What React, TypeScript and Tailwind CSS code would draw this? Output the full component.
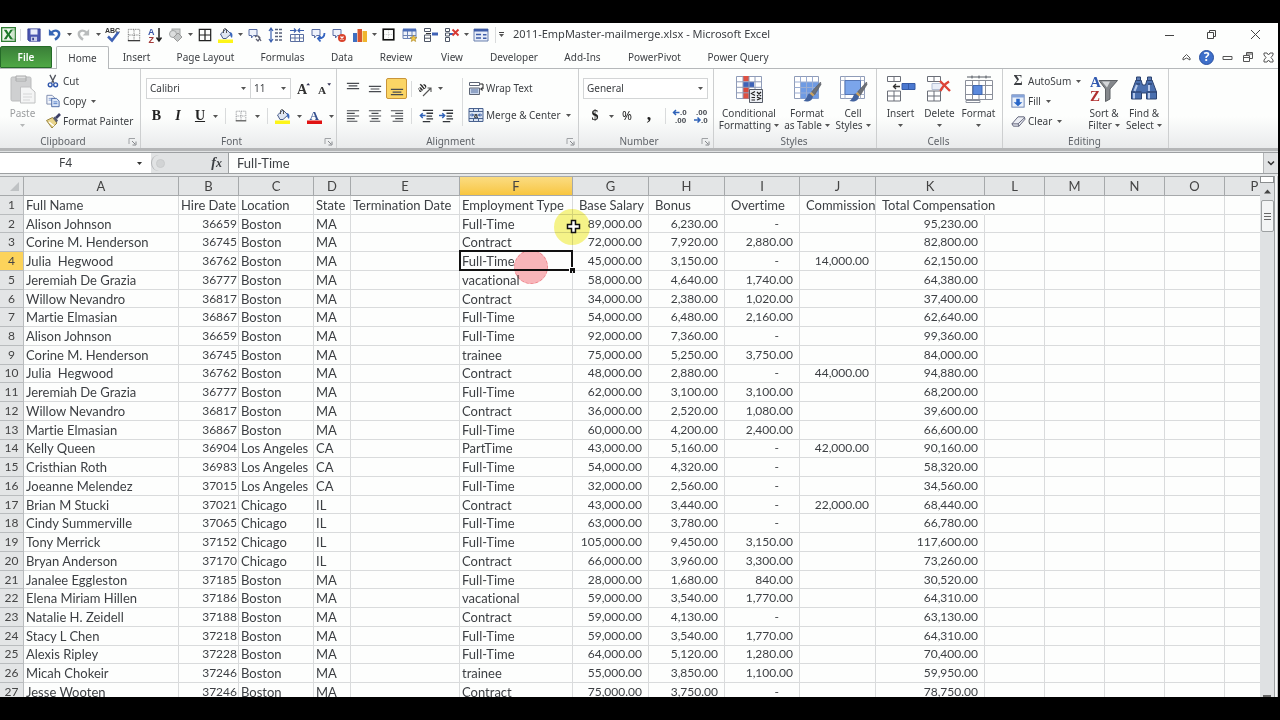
import type { ReactNode } from "react"

type Row = [string, string, string, string, string, string, string, string, string, string]

const employees: Row[] = [
  ["Alison Johnson", "36659", "Boston", "MA", "Full-Time", "89,000.00", "6,230.00", "-", "", "95,230.00"],
  ["Corine M. Henderson", "36745", "Boston", "MA", "Contract", "72,000.00", "7,920.00", "2,880.00", "", "82,800.00"],
  ["Julia  Hegwood", "36762", "Boston", "MA", "Full-Time", "45,000.00", "3,150.00", "-", "14,000.00", "62,150.00"],
  ["Jeremiah De Grazia", "36777", "Boston", "MA", "vacational", "58,000.00", "4,640.00", "1,740.00", "", "64,380.00"],
  ["Willow Nevandro", "36817", "Boston", "MA", "Contract", "34,000.00", "2,380.00", "1,020.00", "", "37,400.00"],
  ["Martie Elmasian", "36867", "Boston", "MA", "Full-Time", "54,000.00", "6,480.00", "2,160.00", "", "62,640.00"],
  ["Alison Johnson", "36659", "Boston", "MA", "Full-Time", "92,000.00", "7,360.00", "-", "", "99,360.00"],
  ["Corine M. Henderson", "36745", "Boston", "MA", "trainee", "75,000.00", "5,250.00", "3,750.00", "", "84,000.00"],
  ["Julia  Hegwood", "36762", "Boston", "MA", "Contract", "48,000.00", "2,880.00", "-", "44,000.00", "94,880.00"],
  ["Jeremiah De Grazia", "36777", "Boston", "MA", "Full-Time", "62,000.00", "3,100.00", "3,100.00", "", "68,200.00"],
  ["Willow Nevandro", "36817", "Boston", "MA", "Contract", "36,000.00", "2,520.00", "1,080.00", "", "39,600.00"],
  ["Martie Elmasian", "36867", "Boston", "MA", "Full-Time", "60,000.00", "4,200.00", "2,400.00", "", "66,600.00"],
  ["Kelly Queen", "36904", "Los Angeles", "CA", "PartTime", "43,000.00", "5,160.00", "-", "42,000.00", "90,160.00"],
  ["Cristhian Roth", "36983", "Los Angeles", "CA", "Full-Time", "54,000.00", "4,320.00", "-", "", "58,320.00"],
  ["Joeanne Melendez", "37015", "Los Angeles", "CA", "Full-Time", "32,000.00", "2,560.00", "-", "", "34,560.00"],
  ["Brian M Stucki", "37021", "Chicago", "IL", "Contract", "43,000.00", "3,440.00", "-", "22,000.00", "68,440.00"],
  ["Cindy Summerville", "37065", "Chicago", "IL", "Full-Time", "63,000.00", "3,780.00", "-", "", "66,780.00"],
  ["Tony Merrick", "37152", "Chicago", "IL", "Full-Time", "105,000.00", "9,450.00", "3,150.00", "", "117,600.00"],
  ["Bryan Anderson", "37170", "Chicago", "IL", "Contract", "66,000.00", "3,960.00", "3,300.00", "", "73,260.00"],
  ["Janalee Eggleston", "37185", "Boston", "MA", "Full-Time", "28,000.00", "1,680.00", "840.00", "", "30,520.00"],
  ["Elena Miriam Hillen", "37186", "Boston", "MA", "vacational", "59,000.00", "3,540.00", "1,770.00", "", "64,310.00"],
  ["Natalie H. Zeidell", "37188", "Boston", "MA", "Contract", "59,000.00", "4,130.00", "-", "", "63,130.00"],
  ["Stacy L Chen", "37218", "Boston", "MA", "Full-Time", "59,000.00", "3,540.00", "1,770.00", "", "64,310.00"],
  ["Alexis Ripley", "37228", "Boston", "MA", "Full-Time", "64,000.00", "5,120.00", "1,280.00", "", "70,400.00"],
  ["Micah Chokeir", "37246", "Boston", "MA", "trainee", "55,000.00", "3,850.00", "1,100.00", "", "59,950.00"],
  ["Jesse Wooten", "37246", "Boston", "MA", "Contract", "75,000.00", "3,750.00", "-", "", "78,750.00"],
]

const columns = [
  { id: "A", w: "w-[155px]" },
  { id: "B", w: "w-[60px]" },
  { id: "C", w: "w-[75px]" },
  { id: "D", w: "w-[37px]" },
  { id: "E", w: "w-[109px]" },
  { id: "F", w: "w-[113px]" },
  { id: "G", w: "w-[76px]" },
  { id: "H", w: "w-[76px]" },
  { id: "I", w: "w-[75px]" },
  { id: "J", w: "w-[76px]" },
  { id: "K", w: "w-[109px]" },
  { id: "L", w: "w-[60px]" },
  { id: "M", w: "w-[60px]" },
  { id: "N", w: "w-[60px]" },
  { id: "O", w: "w-[60px]" },
  { id: "P", w: "w-[60px]" },
]

const tabs = [
  { name: "Insert", w: "w-[55px]" },
  { name: "Page Layout", w: "w-[83px]" },
  { name: "Formulas", w: "w-[71px]" },
  { name: "Data", w: "w-[48px]" },
  { name: "Review", w: "w-[60px]" },
  { name: "View", w: "w-[52px]" },
  { name: "Developer", w: "w-[72px]" },
  { name: "Add-Ins", w: "w-[65px]" },
  { name: "PowerPivot", w: "w-[79px]" },
  { name: "Power Query", w: "w-[88px]" },
]

function Svg({ children, className = "size-4", box = 16 }: { children: ReactNode; className?: string; box?: number }) {
  return (
    <svg viewBox={`0 0 ${box} ${box}`} className={`shrink-0 overflow-visible ${className}`} fill="none" aria-hidden="true">
      {children}
    </svg>
  )
}

function Caret({ className = "text-[#555]" }: { className?: string }) {
  return (
    <svg viewBox="0 0 5 3" className={`h-[3px] w-[5px] shrink-0 ${className}`} aria-hidden="true">
      <path d="M0 0h5L2.5 3z" fill="currentColor" />
    </svg>
  )
}

/* ---------- small icons ---------- */

const ExcelIcon = () => (
  <Svg className="size-[15px]">
    <rect x=".7" y=".7" width="14.6" height="14.6" fill="#eef7ec" stroke="#2e7d32" strokeWidth="1.4" />
    <path d="M11 3h4v10h-4" fill="#cfe6cd" stroke="#5b9a5c" strokeWidth=".7" />
    <path d="M3 3h3l2 3.3L10 3h2.6L9.3 8l3.4 5H9.800L7.800 9.700 5.900 13H3l3.400-5z" fill="#1f7a2c" />
  </Svg>
)

const SaveIcon = () => (
  <Svg className="size-[14px]">
    <path d="M1 1h14v14H2.500L1 13.500z" fill="#4a55b0" stroke="#363f92" />
    <path d="M4 1.500h8v6H4z" fill="#e9ecfa" />
    <path d="M4.500 10h7v5h-7z" fill="#c9cdea" />
    <path d="M6 11h2v3H6z" fill="#39428f" />
  </Svg>
)

const UndoIcon = ({ redo = false }: { redo?: boolean }) => (
  <Svg className={redo ? "size-[15px] -scale-x-100" : "size-[15px]"}>
    <path d="M5 5.500c4-3 8-1.500 8 2 0 2.600-2 4.500-4.500 6" stroke={redo ? "#b9bcbc" : "#3464b4"} strokeWidth="2.600" />
    <path d="M2 2v7h7z" fill={redo ? "#b9bcbc" : "#3464b4"} />
  </Svg>
)

const SpellIcon = () => (
  <Svg>
    <text x="0" y="6" fontSize="7" fontWeight="700" fontFamily="Liberation Sans, sans-serif" fill="#333">ABC</text>
    <path d="M3 9.500l4 4L13.500 5" stroke="#3f62b5" strokeWidth="2.500" />
  </Svg>
)

const DottedIcon = () => (
  <Svg className="size-[14px]">
    <path d="M1.500 14V1.500h13V14M8 2v12M2 8h12" stroke="#555" strokeDasharray="1 1" />
    <path d="M1 14.500h14" stroke="#222" strokeWidth="1.300" />
  </Svg>
)

const SortIcon = () => (
  <Svg>
    <text x="1" y="7.500" fontSize="9" fontWeight="700" fontFamily="Liberation Sans, sans-serif" fill="#3a56a8">A</text>
    <text x="1.500" y="15.500" fontSize="9" fontWeight="700" fontFamily="Liberation Sans, sans-serif" fill="#a33a3a">Z</text>
    <path d="M12 1v12M9.500 10.500L12 14l2.500-3.500" stroke="#222" strokeWidth="1.500" />
  </Svg>
)

const ShapesIcon = () => (
  <Svg>
    <rect x="4" y="2" width="8" height="7" fill="#cfd1d1" stroke="#a2a5a5" />
    <circle cx="5" cy="7" r="3.500" fill="#dcdede" stroke="#a2a5a5" />
    <path d="M10 6l4 4-4.500 4.500-4-4z" fill="#c4c7c7" stroke="#999" />
  </Svg>
)

const AllBordersIcon = () => (
  <Svg className="size-[14px]">
    <path d="M1.500 1.500h13v13h-13zM8 1v14M1 8h14" stroke="#222" strokeWidth="1.400" />
  </Svg>
)

const FillIcon = () => (
  <Svg>
    <path d="M2.500 7L8 2l5 5-5 4.500H5z" fill="#dfe6f2" stroke="#4a5f8c" />
    <path d="M5.500 6V2.500Q7 .5 8.500 2.500V6" stroke="#555" />
    <path d="M12 5c2.500.5 3 2.500 2 6-1.500-1-2.500-3-2-6z" fill="#3a67bb" />
    <rect x="0" y="12.500" width="15" height="3.500" fill="#fdf519" />
  </Svg>
)

const CommentIcon = ({ variant = "plain" }: { variant?: "plain" | "next" | "delete" }) => (
  <Svg>
    <path d="M2 2.500h8v6H6.500L4.500 11V8.500H2z" fill="#eef2fb" stroke="#5a6ea5" />
    {variant === "plain" && <path d="M8 10c2-2 4-1 5 1l-2 3-2-2M11 9l3 5" stroke="#5d5f70" strokeWidth="1.300" />}
    {variant === "next" && <path d="M14.500 6c0 4-2 5.500-6 5.500M10.500 9L8 11.500l2.500 3" stroke="#3464c0" strokeWidth="1.800" />}
    {variant === "delete" && (
      <>
        <circle cx="11" cy="11" r="4" fill="#d9432c" />
        <path d="M9.500 9.500l3 3m0-3l-3 3" stroke="#fff" strokeWidth="1.200" />
      </>
    )}
  </Svg>
)

const RowHeightIcon = () => (
  <Svg>
    <path d="M3 1v14M1 4l2-3 2 3M1 12l2 3 2-3" stroke="#3a5fae" strokeWidth="1.200" />
    <path d="M7 2.500h8M7 6h8M7 9.500h8M7 13h8" stroke="#555f78" strokeWidth="1.300" strokeDasharray="3 1" />
  </Svg>
)

const ColWidthIcon = () => (
  <Svg>
    <path d="M1 3.500h6M9 3.500h6M5 1.500l2 2-2 2M11 1.500l-2 2 2 2" stroke="#3a5fae" strokeWidth="1.200" />
    <path d="M1.500 7.500h13v7h-13zM6 7v8M10.500 7v8M1 11h14" stroke="#5a6fa0" />
  </Svg>
)

const ChartIcon = () => (
  <Svg>
    <rect x="1" y="6" width="4" height="9" fill="#3f6fc0" />
    <rect x="5.500" y="2" width="4.500" height="13" fill="#d9562f" />
    <rect x="10.500" y="4" width="4.500" height="11" fill="#f0b52e" />
  </Svg>
)

const BoxIcon = () => (
  <Svg className="size-[13px]">
    <rect x="1.500" y="1.500" width="13" height="13" stroke="#111" strokeWidth="2" />
    <path d="M8 3v10M3 8h10" stroke="#bbb" strokeDasharray="1 1" />
  </Svg>
)

const TableStarIcon = () => (
  <Svg>
    <path d="M1 2.500h13v9H1zM5.500 3v8.500M10 3v8.500M1 8.500h13" fill="#eef2fa" stroke="#6b83b5" />
    <path d="M1 1.500h13v3H1z" fill="#4a6db8" />
    <path d="M11.500 8l1 2.300 2.500.2-1.900 1.600.6 2.400-2.200-1.300-2.200 1.300.6-2.400L8 10.500l2.500-.2z" fill="#f1c644" stroke="#a9872a" strokeWidth=".6" />
  </Svg>
)

const InsertCellIcon = () => (
  <Svg>
    <path d="M1.500 1.500h6v3h-6zM1.500 8h6v6.500h-6zM1.500 11.200h6" stroke="#4d5565" />
    <path d="M9 5.500h6v3H9z" fill="#3f62b5" />
    <path d="M3 6.500h5" stroke="#333" />
  </Svg>
)

const DeleteCellIcon = () => (
  <Svg>
    <path d="M1.500 1.500h4v3h-4zM1.500 6h4v3h-4zM1.500 10.500h4v4h-4z" stroke="#4d5565" />
    <path d="M6 7h3" stroke="#3f62b5" strokeWidth="2" />
    <path d="M8.500 2.500l6 6m0-6l-6 6" stroke="#d93a34" strokeWidth="1.900" />
  </Svg>
)

const FormIcon = () => (
  <Svg>
    <path d="M1 2h14v12H1z" fill="#e6ecf8" stroke="#6b80ae" />
    <path d="M1 2h14v2.500H1z" fill="#3f5da8" />
    <path d="M3 7.500h5M3 11h5" stroke="#3f5da8" strokeWidth="1.500" />
    <path d="M10 7h3.500v1.500H10zM10 10.500h3.500V12H10z" fill="#3f5da8" />
  </Svg>
)

const CutIcon = () => (
  <Svg className="size-[14px]">
    <path d="M4.500 1l4.500 9M11 1L6.500 10" stroke="#51555f" strokeWidth="1.500" />
    <circle cx="4.800" cy="12.300" r="2.200" stroke="#2f56ab" strokeWidth="1.600" />
    <circle cx="11" cy="12.300" r="2.200" stroke="#2f56ab" strokeWidth="1.600" />
  </Svg>
)

const CopyIcon = () => (
  <Svg className="size-[14px]">
    <path d="M1 1.500h6l2.500 2.500v7.500H1z" fill="#f4f7fc" stroke="#7384a8" />
    <path d="M3 5h4M3 7h4" stroke="#7d99cf" />
    <path d="M6.500 5h5.500l3 3v6.500H6.500z" fill="#dce7f8" stroke="#3f5f9f" />
    <path d="M8.500 9h4.500M8.500 11h4.500" stroke="#4f7ac5" />
  </Svg>
)

const PainterIcon = () => (
  <Svg>
    <path d="M1.500 7.500l6-3 4.500 5.500-5 5z" fill="#e8d48b" stroke="#9a8540" />
    <path d="M4 9l5 4" stroke="#fff" strokeWidth="1.500" />
    <path d="M8 5l2-1.500 3 4-1.500 2z" fill="#565a70" />
    <path d="M11 5L15 1" stroke="#3c3f66" strokeWidth="2.600" />
  </Svg>
)

const BorderIcon = () => (
  <Svg className="size-[14px]">
    <path d="M2.500 13V2.500h11V13M8 3v10M3 8h10" stroke="#7a7d82" strokeDasharray="1 1" />
    <path d="M2 13.500h12" stroke="#444" strokeWidth="1.300" />
  </Svg>
)

const FontColorIcon = () => (
  <Svg>
    <text x="2.500" y="11.500" fontSize="13" fontWeight="700" fontFamily="Liberation Serif, serif" fill="#34508f">A</text>
    <rect x="0" y="12.500" width="15" height="3.500" fill="#e01212" />
  </Svg>
)

const lineSets = {
  top: "M1 1.500h14M3 4.500h10M1 7.500h14",
  middle: "M1 5h14M3 8h10M1 11h14",
  bottom: "M1 8.500h14M3 11.500h10M1 14.500h14",
  left: "M1 2h14M1 5h9M1 8h14M1 11h9M1 14h12",
  center: "M1 2h14M4 5h8M1 8h14M4 11h8M2 14h12",
  right: "M1 2h14M6 5h9M1 8h14M6 11h9M3 14h12",
}

const Lines = ({ kind }: { kind: keyof typeof lineSets }) => (
  <Svg className="size-[14px]">
    <path d={lineSets[kind]} stroke="#484b50" strokeWidth="1.400" />
  </Svg>
)

const OrientIcon = () => (
  <Svg>
    <text x="1" y="9" fontSize="9" fontWeight="700" fontFamily="Liberation Serif, serif" fill="#222" transform="rotate(-40 5 9)">ab</text>
    <path d="M5 15L13 7M13 11V7H9.500" stroke="#555" strokeWidth="1.100" />
  </Svg>
)

const IndentIcon = ({ out = false }: { out?: boolean }) => (
  <Svg className="size-[15px]">
    <path d="M4 1.500h11M8 4.500h7M8 7.500h6M8 10.500h7M4 13.500h8" stroke="#33363b" strokeWidth="1.400" />
    <path d={out ? "M7 7H2M4 4.500L1.500 7 4 9.500" : "M0 7h5M3.500 4.500L6 7 3.500 9.500"} stroke="#2f62b8" strokeWidth="1.600" />
  </Svg>
)

const WrapIcon = () => (
  <Svg>
    <path d="M1.500 2.500h10v3h-10z" fill="#fff" stroke="#5c6474" />
    <path d="M1.500 8h10v6.500h-10z" fill="#c8d5ea" stroke="#5c6474" />
    <path d="M3 10h7M3 12h7" stroke="#5873a3" />
    <path d="M12 4h3v5h-2M14.500 7.500L12.500 9l2 1.500" stroke="#222" />
  </Svg>
)

const MergeIcon = () => (
  <Svg>
    <path d="M1 1.500h14v13H1z" fill="#dbe4f3" stroke="#49628f" />
    <path d="M1 4.500h14M1 11.500h14M5.500 1.500v3M10.500 1.500v3M5.500 11.500v3M10.500 11.500v3" stroke="#49628f" />
    <path d="M2 8h3.500M14 8h-3.500M4 6.500L5.500 8 4 9.500M12 6.500L10.500 8l1.500 1.500" stroke="#244c9b" />
    <text x="6" y="10.500" fontSize="7" fontWeight="700" fontFamily="Liberation Sans, sans-serif" fill="#222">a</text>
  </Svg>
)

const DecimalIcon = ({ less = false }: { less?: boolean }) => (
  <Svg>
    <g fontSize="8" fontWeight="700" fontFamily="Liberation Sans, sans-serif" fill="#44484f">
      <text x={less ? 3 : 8} y="7">{less ? ".00" : ".0"}</text>
      <text x={less ? 8 : 3} y="15">{less ? ".0" : ".00"}</text>
    </g>
    <path d={less ? "M1 12h6M4.500 9.500L7 12l-2.500 2.500" : "M1.500 4.500h6M4 2L1.500 4.500 4 7"} stroke="#2f62b8" strokeWidth="1.500" />
  </Svg>
)

const FillDownIcon = () => (
  <Svg className="size-[14px]">
    <rect x="1" y="1" width="14" height="14" fill="#eaf1fb" stroke="#5d76a8" />
    <path d="M1 1h14v3H1z" fill="#86a4d9" />
    <path d="M6 5.500h4v4h3L8 14 3 9.500h3z" fill="#2866c8" />
  </Svg>
)

const EraserIcon = () => (
  <Svg className="size-[15px]">
    <path d="M7.500 3h6.500l1 2.500L8.500 13H2.500L1 10.500z" fill="#eceef4" stroke="#5c5f75" />
    <path d="M1 10.500h6.500L15 3.500M7.500 10.500l1 2.500" stroke="#5c5f75" />
  </Svg>
)

const LauncherIcon = () => (
  <Svg className="size-[9px]" box={9}>
    <path d="M1 7V1.500h6" stroke="#9fa2a5" />
    <path d="M4 4l3 3M8 4.500V8H4.500" stroke="#85888c" />
  </Svg>
)

/* ---------- large icons ---------- */

const PasteIcon = () => (
  <Svg className="size-[30px]" box={30}>
    <rect x="3" y="2" width="20" height="24" rx="1.500" fill="#cfd0d1" stroke="#bbbcbd" />
    <path d="M8 1h10v5H8z" fill="#e0e1e1" stroke="#a9aaab" />
    <path d="M8 4h10" stroke="#a9aaab" />
    <path d="M12.500 12h9l5.500 5v11H12.500z" fill="#f4f5f5" stroke="#c0c1c2" />
    <path d="M15 19h9M15 22h9M15 25h7" stroke="#d5d6d7" />
  </Svg>
)

const CondFormatIcon = () => (
  <Svg className="size-[28px]" box={28}>
    <path d="M1.500 1.500h25v22h-25z" fill="#fff" stroke="#8f9cb8" />
    <path d="M8 1v5.500h6V1zM8 17h6v6.500H8z" fill="#dd5142" />
    <path d="M8 7h11v5H8z" fill="#3e63b8" />
    <path d="M8 12h6v5H8z" fill="#d9493b" />
    <path d="M1.500 6.800h25M1.500 12.300h25M1.500 17.800h25M8 1.500v22M14 1.500v22M20 1.500v22" stroke="#8f9cb8" />
    <path d="M14.500 14.500h13v13h-13z" fill="#eceff4" stroke="#555b66" />
    <path d="M20 16.500l-3.500 2 3.500 2M16.500 22.500h3.500M16.500 25h3.500M22 17l4 4m0-4l-4 4M22 25l3.500-1.500-3.500-1.500" stroke="#222" strokeWidth="1.200" />
  </Svg>
)

const Brush = () => (
  <>
    <path d="M27.500 7L18.500 17l3 3L28 9.500z" fill="#6c7077" stroke="#54575e" strokeWidth=".6" />
    <path d="M18.500 17l-2 2 3 3 2-2z" fill="#c9a15d" />
    <path d="M16.500 18.500c-2.500.5-2 5-6 7.500 5 1.500 9-.5 9.500-4.500z" fill="#42639f" />
  </>
)

const FormatTableIcon = () => (
  <Svg className="size-[28px]" box={28}>
    <path d="M1.500 1.500h24v22h-24z" fill="#fff" stroke="#8f9cb8" />
    <path d="M7.500 7h18v16.500h-18z" fill="#6f9be3" />
    <path d="M1.500 7h24M1.500 12.500h24M1.500 18h24M7.500 1.500v22M13.500 1.500v22M19.500 1.500v22" stroke="#9aadd2" />
    <Brush />
  </Svg>
)

const CellStylesIcon = () => (
  <Svg className="size-[28px]" box={28}>
    <path d="M1.500 1.500h24v22h-24z" fill="#fff" stroke="#8f9cb8" />
    <path d="M1.500 5.500h24M1.500 19.500h24M6 1.500v22M21.500 1.500v22" stroke="#a9b4cb" />
    <path d="M6 5.500h15.500v14H6z" fill="#7ba5ea" stroke="#5576b4" />
    <Brush />
  </Svg>
)

const InsertIcon = () => (
  <Svg className="size-[28px]" box={28}>
    <path d="M.5 1.500h13v5H.5zM7 1.500v5M.5 16h13v10H.5zM7 16v10M.5 21h13" fill="#fff" stroke="#6b6f78" />
    <path d="M15 8.500h13v6H15zM21.500 8.500v6" fill="#4a78d0" stroke="#355ba5" />
    <path d="M13 11.500H6M9 9l-2.500 2.500L9 14" stroke="#333" strokeWidth="1.300" />
  </Svg>
)

const DeleteIcon = () => (
  <Svg className="size-[28px]" box={28}>
    <path d="M1.500 1.500h13v5h-13zM8 1.500v5M1.500 16h13v10h-13zM8 16v10M1.500 21h13" fill="#fff" stroke="#6b6f78" />
    <path d="M6 8.500h11v6H6z" fill="#e9eef8" stroke="#b4bfd4" />
    <path d="M14 6l10 10M23 6.500C19 9 16 12 14.500 16" stroke="#dd4437" strokeWidth="2.400" />
  </Svg>
)

const FormatIcon = () => (
  <Svg className="size-[30px]" box={30}>
    <path d="M3 2h24M8 .5v3M15 .5v3M22 .5v3" stroke="#555a63" />
    <path d="M1.500 5.500h27v19h-27zM1.500 10.500h27M1.500 19.500h27M8.500 5.500v19M21.500 5.500v19M15 5.500v19" fill="#fff" stroke="#8a8f9a" />
    <path d="M9 10.500h9v9H9z" fill="#5b89dc" stroke="#4067ae" />
    <path d="M2 27.500h14v-2H2z" fill="#fff" stroke="#8a8f9a" />
  </Svg>
)

const SortFilterIcon = () => (
  <Svg className="size-[28px]" box={28}>
    <path d="M9 5.500h18.500L20 14v10l-4.500 2.500V14z" fill="#85888c" stroke="#5d6064" />
    <path d="M12 6.500h8l-3 6z" fill="#d5d7d9" />
    <text x="0" y="12" fontSize="15" fontWeight="700" fontFamily="Liberation Serif, serif" fill="#3159b0">A</text>
    <text x="0" y="26" fontSize="15" fontWeight="700" fontFamily="Liberation Serif, serif" fill="#b03030">Z</text>
  </Svg>
)

const BinocularsIcon = () => (
  <Svg className="size-[28px]" box={28}>
    <path d="M6 5h5l1.500 5h3L17 5h5l4.500 12v7H16.500v-6h-5v6H1.500v-7z" fill="#4a6fae" stroke="#2b426f" />
    <path d="M6.500 2h4v3.500h-4zM17.500 2h4v3.500h-4z" fill="#5d7cb4" stroke="#2b426f" />
    <path d="M1.500 17h10M16.500 17h10M6 9h4M18 9h4" stroke="#23375f" />
    <path d="M4 18v5.500M19 18v5.500M7 10l-2.500 6M19 10v6" stroke="#b5c8ea" strokeWidth="2" />
  </Svg>
)

/* ---------- ribbon pieces ---------- */

function QuickButton({ label, children }: { label: string; children: ReactNode }) {
  return (
    <button aria-label={label} className="flex w-[21px] shrink-0 items-center justify-center">
      {children}
    </button>
  )
}

function CaretButton({ label, className = "w-2" }: { label: string; className?: string }) {
  return (
    <button aria-label={label} className={`flex h-4 shrink-0 items-center justify-center ${className}`}>
      <Caret />
    </button>
  )
}

function Group({ name, className, launcher, children }: { name: string; className: string; launcher?: boolean; children: ReactNode }) {
  return (
    <section aria-label={name} className={`flex shrink-0 flex-col border-r border-[#cdcfd0] ${className}`}>
      <div className="flex h-[65px] items-start">{children}</div>
      <div className="flex h-[14px] items-center text-[#5f6368]">
        <span className="flex-1 pr-[2px] text-center">{name}</span>
        {launcher && (
          <button aria-label={`${name} options`} className="mr-[3px]">
            <LauncherIcon />
          </button>
        )}
      </div>
    </section>
  )
}

function SmallButton({ icon, label, caret }: { icon: ReactNode; label: string; caret?: boolean }) {
  return (
    <button className="flex h-5 items-center whitespace-nowrap">
      <span className="mr-[2px] flex w-4 justify-center">{icon}</span>
      {label}
      {caret && <Caret className="ml-[5px] text-[#555]" />}
    </button>
  )
}

function BigButton({ icon, lines, className, muted }: { icon: ReactNode; lines: string[]; className: string; muted?: boolean }) {
  const last = lines[lines.length - 1]
  return (
    <button className={`flex shrink-0 flex-col items-center whitespace-nowrap pt-[6px] leading-3 ${muted ? "text-[#9b9d9f]" : ""} ${className}`}>
      <span className="flex h-8 items-start">{icon}</span>
      {lines.length > 1 ? (
        <>
          <span>{lines[0]}</span>
          <span className="flex items-center gap-[3px]">
            {last}
            <Caret />
          </span>
        </>
      ) : (
        <>
          <span>{last}</span>
          <span className="flex h-3 items-center">
            <Caret className={muted ? "text-[#b5b7b8]" : "text-[#555]"} />
          </span>
        </>
      )}
    </button>
  )
}

function Combo({ label, value, className }: { label: string; value: string; className: string }) {
  return (
    <div className={`flex h-[21px] items-center border border-[#d3d5d6] bg-white pr-1 ${className}`}>
      <select aria-label={label} defaultValue={value} className="min-w-0 flex-1 appearance-none bg-transparent pl-[3px] outline-none">
        <option>{value}</option>
      </select>
      <Caret />
    </div>
  )
}

const Divider = ({ className = "h-4" }: { className?: string }) => <span className={`w-px shrink-0 bg-[#d9dbdc] ${className}`} />

function TitleBar() {
  return (
    <header className="flex h-[23px] items-center justify-between">
      <div className="flex items-center pl-px">
        <ExcelIcon />
        <Divider className="ml-1 mr-[2px] h-3" />
        <QuickButton label="Save"><SaveIcon /></QuickButton>
        <QuickButton label="Undo"><UndoIcon /></QuickButton>
        <CaretButton label="Undo list" />
        <QuickButton label="Redo"><UndoIcon redo /></QuickButton>
        <CaretButton label="Redo list" />
        <QuickButton label="Spelling"><SpellIcon /></QuickButton>
        <QuickButton label="Bottom border"><DottedIcon /></QuickButton>
        <QuickButton label="Sort ascending"><SortIcon /></QuickButton>
        <QuickButton label="Shapes"><ShapesIcon /></QuickButton>
        <CaretButton label="Shapes list" />
        <QuickButton label="All borders"><AllBordersIcon /></QuickButton>
        <QuickButton label="Fill colour"><FillIcon /></QuickButton>
        <CaretButton label="Fill colours" />
        <QuickButton label="Edit comment"><CommentIcon /></QuickButton>
        <QuickButton label="Row height"><RowHeightIcon /></QuickButton>
        <QuickButton label="Column width"><ColWidthIcon /></QuickButton>
        <QuickButton label="Next comment"><CommentIcon variant="next" /></QuickButton>
        <QuickButton label="Delete comment"><CommentIcon variant="delete" /></QuickButton>
        <QuickButton label="Chart"><ChartIcon /></QuickButton>
        <CaretButton label="Chart types" />
        <QuickButton label="Outside border"><BoxIcon /></QuickButton>
        <QuickButton label="Table"><TableStarIcon /></QuickButton>
        <QuickButton label="Insert cells"><InsertCellIcon /></QuickButton>
        <QuickButton label="Delete cells"><DeleteCellIcon /></QuickButton>
        <CaretButton label="Delete list" />
        <QuickButton label="Form"><FormIcon /></QuickButton>
        <Divider className="ml-1 mr-[3px] h-4" />
        <button aria-label="Customize toolbar" className="flex flex-col items-center gap-px">
          <span className="h-px w-[5px] bg-[#444]" />
          <Caret />
        </button>
        <h1 className="ml-[9px] whitespace-pre text-[11px]">2011-EmpMaster-mailmerge.xlsx - Microsoft Excel</h1>
      </div>
      <div className="flex items-center text-[#444]">
        <button aria-label="Minimize" className="flex w-[42px] justify-center">
          <Svg className="size-[11px]" box={11}><path d="M1 6.500h9" stroke="currentColor" /></Svg>
        </button>
        <button aria-label="Restore" className="flex w-[42px] justify-center">
          <Svg className="size-[11px]" box={11}><path d="M1.500 3.500h6v6h-6zM3.500 3.500v-2h6v6h-2" stroke="currentColor" /></Svg>
        </button>
        <button aria-label="Close" className="flex w-[46px] justify-center">
          <Svg className="size-[11px]" box={11}><path d="M1 1l9 9m0-9l-9 9" stroke="currentColor" /></Svg>
        </button>
      </div>
    </header>
  )
}

function TabBar() {
  return (
    <nav className="flex h-[23px] items-stretch justify-between border-b border-[#b5b8ba]">
      <div className="flex items-stretch">
        <button className="w-[52px] rounded-t-xs border border-[#256b28] bg-linear-to-b from-[#3a7f38] to-[#4fa845] font-semibold text-white">File</button>
        <button aria-current="page" className="-mb-px ml-1 w-[53px] rounded-t-xs border border-b-0 border-[#b5b8ba] bg-[#fdfefd]">Home</button>
        {tabs.map((tab) => (
          <button key={tab.name} className={`whitespace-nowrap ${tab.w}`}>{tab.name}</button>
        ))}
      </div>
      <div className="flex items-center text-[#555]">
        <button aria-label="Collapse ribbon" className="flex w-[19px] justify-center">
          <Svg className="size-[9px]" box={9}><path d="M1 5l3.500-3.500L8 5v2L4.500 5 1 7z" stroke="currentColor" /></Svg>
        </button>
        <button aria-label="Help" className="flex w-[21px] justify-center">
          <span className="flex size-[15px] items-center justify-center rounded-full border border-[#2a50a0] bg-[#3e6fca] text-xs font-bold leading-none text-white">?</span>
        </button>
        <button aria-label="Minimize workbook" className="flex w-[21px] justify-center">
          <Svg className="size-[11px]" box={11}><path d="M1 4.500h9v3H1z" stroke="currentColor" /></Svg>
        </button>
        <button aria-label="Restore workbook" className="flex w-[20px] justify-center">
          <Svg className="size-[12px]" box={12}><path d="M1.500 4.500h6v6h-6zM1.500 6.500h6M4.500 4V1.500h6v6H8M4.500 3h6" stroke="currentColor" /></Svg>
        </button>
        <button aria-label="Close workbook" className="flex w-[20px] justify-center">
          <Svg className="size-[11px]" box={11}><path d="M1 1h3l1.500 2L7 1h3v2L8 5.500 10 8v2H7L5.500 8 4 10H1V8l2-2.500L1 3z" stroke="currentColor" /></Svg>
        </button>
      </div>
    </nav>
  )
}

function Ribbon() {
  return (
    <div className="flex h-[79px] overflow-hidden bg-linear-to-b from-[#fdfefd] from-60% to-[#e9ebec]">
      <Group name="Clipboard" className="w-[141px]" launcher>
        <BigButton icon={<PasteIcon />} lines={["Paste"]} className="w-[45px]" muted />
        <div className="flex flex-col pt-[2px]">
          <SmallButton icon={<CutIcon />} label="Cut" />
          <SmallButton icon={<CopyIcon />} label="Copy" caret />
          <SmallButton icon={<PainterIcon />} label="Format Painter" />
        </div>
      </Group>

      <Group name="Font" className="w-[196px]" launcher>
        <div className="flex flex-col gap-[7px] pl-[5px] pt-[9px]">
          <div className="flex items-center">
            <Combo label="Font name" value="Calibri" className="w-[105px]" />
            <Combo label="Font size" value="11" className="-ml-px w-[41px]" />
            <button aria-label="Grow font" className="flex w-6 justify-center">
              <Svg className="size-[15px]"><text x="1" y="14" fontSize="15" fontWeight="700" fontFamily="Liberation Serif, serif" fill="#333">A</text><path d="M11 4.500l2-2.500 2 2.500z" fill="#335" /></Svg>
            </button>
            <button aria-label="Shrink font" className="flex w-[18px] justify-center">
              <Svg className="size-[15px]"><text x="1" y="14" fontSize="12" fontWeight="700" fontFamily="Liberation Serif, serif" fill="#333">A</text><path d="M11 2.500h4l-2 2.500z" fill="#335" /></Svg>
            </button>
          </div>
          <div className="flex h-5 items-center font-['Liberation_Serif',serif] text-sm text-[#222]">
            <button className="w-[21px] font-bold">B</button>
            <button className="w-[22px] font-bold italic">I</button>
            <button className="w-[22px] font-bold underline">U</button>
            <CaretButton label="Underline styles" />
            <Divider className="mx-[6px] h-4" />
            <button aria-label="Borders" className="flex w-[18px] justify-center"><BorderIcon /></button>
            <CaretButton label="Border list" className="w-[14px]" />
            <Divider className="mx-[3px] h-4" />
            <button aria-label="Fill color" className="flex w-6 justify-center"><FillIcon /></button>
            <CaretButton label="Fill colors" />
            <button aria-label="Font color" className="flex w-6 justify-center"><FontColorIcon /></button>
            <CaretButton label="Font colors" />
          </div>
        </div>
      </Group>

      <Group name="Alignment" className="w-[242px]" launcher>
        <div className="flex flex-col gap-[7px] pl-[5px] pt-[9px]">
          <div className="flex h-[21px] items-center">
            <button aria-label="Top align" className="flex w-[22px] justify-center"><Lines kind="top" /></button>
            <button aria-label="Middle align" className="flex w-[22px] justify-center"><Lines kind="middle" /></button>
            <button aria-label="Bottom align" aria-pressed="true" className="flex h-[21px] w-[21px] items-center justify-center rounded-xs border border-[#c9953a] bg-[#fbd565]"><Lines kind="bottom" /></button>
            <Divider className="mx-1 h-4" />
            <button aria-label="Orientation" className="flex w-5 justify-center"><OrientIcon /></button>
            <CaretButton label="Orientations" />
          </div>
          <div className="flex h-5 items-center">
            <button aria-label="Align left" className="flex w-[22px] justify-center"><Lines kind="left" /></button>
            <button aria-label="Align center" className="flex w-[22px] justify-center"><Lines kind="center" /></button>
            <button aria-label="Align right" className="flex w-[21px] justify-center"><Lines kind="right" /></button>
            <Divider className="mx-1 h-4" />
            <button aria-label="Decrease indent" className="flex w-5 justify-center"><IndentIcon out /></button>
            <button aria-label="Increase indent" className="flex w-5 justify-center"><IndentIcon /></button>
          </div>
        </div>
        <Divider className="ml-[6px] mr-[5px] mt-[9px] h-12" />
        <div className="flex flex-col gap-[7px] pt-[9px]">
          <SmallButton icon={<WrapIcon />} label="Wrap Text" />
          <SmallButton icon={<MergeIcon />} label="Merge & Center" caret />
        </div>
      </Group>

      <Group name="Number" className="w-[135px]" launcher>
        <div className="flex flex-col gap-[7px] pl-1 pt-[9px]">
          <Combo label="Number format" value="General" className="w-[125px]" />
          <div className="flex h-5 items-center text-sm text-[#222]">
            <button className="w-6 font-['Liberation_Serif',serif] font-bold">$</button>
            <CaretButton label="Currency list" />
            <button className="w-6 text-xs">%</button>
            <button className="w-5 pb-1 font-['Liberation_Serif',serif] text-lg font-bold leading-none">,</button>
            <Divider className="ml-[6px] mr-1 h-4" />
            <button aria-label="Increase decimal" className="flex w-5 justify-center"><DecimalIcon /></button>
            <button aria-label="Decrease decimal" className="flex w-[22px] justify-center"><DecimalIcon less /></button>
          </div>
        </div>
      </Group>

      <Group name="Styles" className="w-[163px]">
        <BigButton icon={<CondFormatIcon />} lines={["Conditional", "Formatting"]} className="w-[70px]" />
        <BigButton icon={<FormatTableIcon />} lines={["Format", "as Table"]} className="w-[46px]" />
        <BigButton icon={<CellStylesIcon />} lines={["Cell", "Styles"]} className="w-[46px]" />
      </Group>

      <Group name="Cells" className="w-[126px]">
        <BigButton icon={<InsertIcon />} lines={["Insert"]} className="ml-1 w-[39px]" />
        <BigButton icon={<DeleteIcon />} lines={["Delete"]} className="w-[39px]" />
        <BigButton icon={<FormatIcon />} lines={["Format"]} className="w-[39px]" />
      </Group>

      <Group name="Editing" className="w-[166px]">
        <div className="flex w-[81px] flex-col pl-[7px] pt-[2px]">
          <SmallButton icon={<b className="font-['Liberation_Serif',serif] text-sm">Σ</b>} label="AutoSum" caret />
          <SmallButton icon={<FillDownIcon />} label="Fill" caret />
          <SmallButton icon={<EraserIcon />} label="Clear" caret />
        </div>
        <BigButton icon={<SortFilterIcon />} lines={["Sort &", "Filter"]} className="w-10" />
        <BigButton icon={<BinocularsIcon />} lines={["Find &", "Select"]} className="w-10" />
      </Group>
    </div>
  )
}

function FormulaBar() {
  return (
    <div className="flex h-[28px] items-stretch border-t-[3px] border-b-[2px] border-t-[#b4b6b7] border-b-[#e6e8e9] bg-[#e1e3e4] pt-px text-xs">
      <div className="flex w-[151px] items-center border-y border-[#9da0a2] bg-white pr-1">
        <input aria-label="Name box" defaultValue="F4" className="w-0 flex-1 bg-transparent text-center outline-none" />
        <button aria-label="Names" className="flex w-4 justify-center"><Caret className="text-[#333]" /></button>
      </div>
      <div className="flex flex-1 items-center border-y border-[#9da0a2]">
        <div className="flex w-[77px] items-center justify-between rounded-l-full border-l border-[#b3b5b7] pl-1 pr-[6px]">
          <span className="size-[9px] rounded-full border border-[#c9cbcc] bg-[#d2d4d5]" />
          <button aria-label="Insert function" className="font-['Liberation_Serif',serif] text-sm font-bold italic leading-none">
            f<span className="text-xs">x</span>
          </button>
        </div>
        <input aria-label="Formula bar" defaultValue="Full-Time" className="h-full min-w-0 flex-1 border-l border-[#9da0a2] bg-[#fdfefd] pl-2 font-[Lato,sans-serif] text-[13px] outline-none" />
        <button aria-label="Expand formula bar" className="flex h-full w-[15px] items-center justify-center border-l border-[#b3b5b7]">
          <Svg className="size-2" box={8}><path d="M1 2.500l3 3 3-3" stroke="#333" strokeWidth="1.500" /></Svg>
        </button>
      </div>
    </div>
  )
}

function Cell({ children, className = "" }: { children?: ReactNode; className?: string }) {
  return <td className={`whitespace-pre border-b border-r border-[#d9dbdc] p-0 ${className}`}>{children}</td>
}

function Amount({ value }: { value: string }) {
  return <Cell className={`text-right text-xs leading-4 ${value === "-" ? "pr-5" : "pr-[6px]"}`}>{value}</Cell>
}

function RowHeader({ n, active }: { n: number; active?: boolean }) {
  return (
    <th scope="row" className={`border-b border-r border-[#b9bcbe] p-0 text-center text-xs leading-4 font-normal text-[#444] ${active ? "bg-[#fcd35b]" : "bg-[#e3e5e6]"}`}>
      {n}
    </th>
  )
}

const EmptyCells = () => (
  <>
    <Cell />
    <Cell />
    <Cell />
    <Cell />
    <Cell />
  </>
)

function Sheet() {
  return (
    <div className="flex min-h-0 flex-1">
      <div className="min-w-0 flex-1 overflow-hidden bg-[#fdfefd]">
        <table className="h-[calc(100%+5px)] w-[1285px] table-fixed border-separate border-spacing-0 font-[Lato,sans-serif] text-[13px] leading-4 [font-variant-ligatures:none]">
          <thead>
            <tr className="h-5">
              <th className="w-6 border-y border-r border-[#a6a9ab] bg-[#e3e5e6] p-0">
                <Svg className="ml-auto mr-1 size-[9px]" box={9}><path d="M9 0v9H0z" fill="#bfc2c4" /></Svg>
              </th>
              {columns.map((col) => (
                <th
                  key={col.id}
                  scope="col"
                  className={`border-y border-r border-[#a6a9ab] p-0 text-center font-normal text-[#444] ${col.w} ${col.id === "F" ? "bg-linear-to-b from-[#fbdc80] to-[#f8c63d]" : "bg-[#e3e5e6]"}`}
                >
                  {col.id}
                </th>
              ))}
            </tr>
          </thead>
          <tbody>
            <tr>
              <RowHeader n={1} />
              <Cell className="pl-[2px]">Full Name</Cell>
              <Cell className="pl-[2px]">Hire Date</Cell>
              <Cell className="pl-[2px]">Location</Cell>
              <Cell className="pl-[2px]">State</Cell>
              <Cell className="pl-[2px]">Termination Date</Cell>
              <Cell className="pl-[2px]">Employment Type</Cell>
              <Cell className="pl-[6px]">Base Salary</Cell>
              <Cell className="pl-[6px]">Bonus</Cell>
              <Cell className="pl-[6px]">Overtime</Cell>
              <Cell className="overflow-hidden pl-[6px]">Commission</Cell>
              <Cell className="border-r-transparent pl-[6px]">Total Compensation</Cell>
              <EmptyCells />
            </tr>
            {employees.map((row, i) => (
              <tr key={i}>
                <RowHeader n={i + 2} active={i === 2} />
                <Cell className="pl-[2px]">{row[0]}</Cell>
                <Cell className="pr-px text-right text-xs leading-4">{row[1]}</Cell>
                <Cell className="pl-[2px]">{row[2]}</Cell>
                <Cell className="pl-[2px]">{row[3]}</Cell>
                <Cell />
                <Cell className="relative pl-[2px]">
                  {row[4]}
                  {i === 0 && (
                    <>
                      <span className="absolute -right-[18px] -top-[6px] z-10 size-9 rounded-full bg-[#f2ec3a]/60 mix-blend-multiply" />
                      <span className="absolute -right-[9px] top-[4px] z-20">
                        <Svg className="size-[15px]" box={15}>
                          <path d="M5.500 1.500h4v4h4v4h-4v4h-4v-4h-4v-4h4z" fill="#fff" stroke="#111" strokeWidth="1.500" />
                        </Svg>
                      </span>
                    </>
                  )}
                  {i === 2 && (
                    <>
                      <span className="absolute -inset-x-px -bottom-px -top-[2px] border-2 border-[#111]" />
                      <span className="absolute -bottom-[3px] -right-[3px] size-[6px] border-l border-t border-white bg-[#111]" />
                      <span className="absolute left-[54px] -top-[2px] z-10 size-[34px] rounded-full border border-dashed border-[#f08a90] bg-[#f6868e]/60 mix-blend-multiply" />
                    </>
                  )}
                </Cell>
                <Amount value={row[5]} />
                <Amount value={row[6]} />
                <Amount value={row[7]} />
                <Amount value={row[8]} />
                <Amount value={row[9]} />
                <EmptyCells />
              </tr>
            ))}
          </tbody>
        </table>
      </div>
      <div className="flex w-[15px] flex-col items-center overflow-hidden border-r border-[#9da0a2] bg-[#dfe1e3]">
        <span className="h-[7px] w-full shrink-0 border border-[#8b8e90] bg-white" />
        <button aria-label="Scroll up" className="flex h-[17px] shrink-0 items-center">
          <Svg className="h-[7px] w-[9px]" box={9}><path d="M0 7L4.500 2 9 7z" fill="#444" /></Svg>
        </button>
        <div className="flex h-8 w-[13px] shrink-0 flex-col items-center justify-center gap-[2px] rounded-xs border border-[#9da0a2] bg-[#f3f4f5]">
          <span className="h-px w-[7px] bg-[#666]" />
          <span className="h-px w-[7px] bg-[#666]" />
          <span className="h-px w-[7px] bg-[#666]" />
        </div>
        <button aria-label="Scroll down" className="mt-auto h-[2px] w-2 shrink-0 bg-[#666]" />
      </div>
      <div className="w-[3px] border-r border-[#c3c5c7] bg-[#f5f6f6]" />
    </div>
  )
}

export default function App() {
  return (
    <div className="h-screen bg-black pb-[23px] pr-[2px] pt-[23px]">
      <main className="flex h-full flex-col overflow-hidden bg-[#fdfefd] font-['Noto_Sans',sans-serif] text-[10px] text-[#3c3f43]">
        <TitleBar />
        <TabBar />
        <Ribbon />
        <FormulaBar />
        <Sheet />
      </main>
    </div>
  )
}
